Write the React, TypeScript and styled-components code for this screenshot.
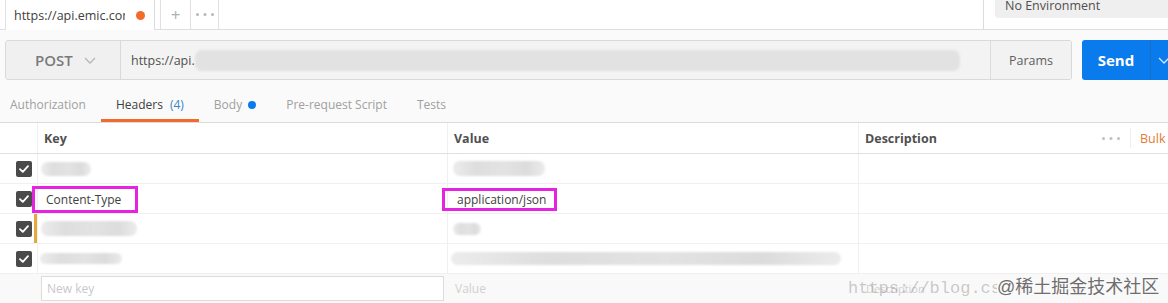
import React from 'react';
import styled, { createGlobalStyle } from 'styled-components';

const GlobalStyle = createGlobalStyle`
  * { box-sizing: border-box; }
  html, body {
    margin: 0;
    padding: 0;
    background: #fafafa;
    font-family: 'Open Sans', 'Noto Sans', sans-serif;
    color: #505050;
  }
`;

interface BlurProps {
  $w: number;
  $h?: number;
  $ml?: number;
  $tone?: string;
}

const Check = () => (
  <svg width="10" height="8" viewBox="0 0 10 8">
    <path d="M1 4.2 L3.8 6.8 L9 1.2" fill="none" stroke="#fff" strokeWidth="1.8" strokeLinecap="round" strokeLinejoin="round" />
  </svg>
);

const Chevron = ({ color }: { color: string }) => (
  <svg width="12" height="7" viewBox="0 0 12 7">
    <path d="M1 1 L6 6 L11 1" fill="none" stroke={color} strokeWidth="1.3" />
  </svg>
);

const Dots = ({ color, size }: { color: string; size: number }) => (
  <svg width={size * 6} height={size} viewBox="0 0 18 3">
    <circle cx="1.5" cy="1.5" r="1.5" fill={color} />
    <circle cx="9" cy="1.5" r="1.5" fill={color} />
    <circle cx="16.5" cy="1.5" r="1.5" fill={color} />
  </svg>
);

const App = () => {
  const rows = [
    { key: <Blur $w={50} $h={14} />, value: <Blur $w={92} $h={15} $ml={-2} /> },
    {
      key: <Highlight $shift={12} $pad={11} $right={14}>Content-Type</Highlight>,
      value: <Highlight $shift={13} $pad={12} $right={8} $slim>application/json</Highlight>,
    },
    { key: <Blur $w={96} $h={15} />, value: <Blur $w={28} $h={12} $ml={-2} />, edited: true },
    { key: <Blur $w={82} $h={11} $ml={-4} />, value: <Blur $w={390} $h={13} $ml={-4} /> },
  ];

  return (
    <Page>
      <GlobalStyle />
      <TopBar>
        <ActiveTab>
          <TabTitle>https://api.emic.com</TabTitle>
          <UnsavedDot />
        </ActiveTab>
        <SmallTab $first>+</SmallTab>
        <SmallTab>
          <Dots color="#b8b8b8" size={3} />
        </SmallTab>
        <TopSpacer />
        <EnvArea>
          <EnvSelect>No Environment</EnvSelect>
        </EnvArea>
      </TopBar>

      <RequestBar>
        <UrlGroup>
          <Method>
            POST
            <Chevron color="#b5b5b5" />
          </Method>
          <UrlInput>
            https://api.
            <Blur $w={765} $h={21} $ml={0} $tone="#e2e2e2" />
          </UrlInput>
          <ParamsButton>Params</ParamsButton>
        </UrlGroup>
        <SendGroup>
          <SendLabel>Send</SendLabel>
          <SendArrow>
            <Chevron color="#cfe4fb" />
          </SendArrow>
        </SendGroup>
      </RequestBar>

      <Tabs>
        <Tab>Authorization</Tab>
        <Tab $active>
          Headers<Count>(4)</Count>
        </Tab>
        <Tab>
          Body<BlueDot />
        </Tab>
        <Tab>Pre-request Script</Tab>
        <Tab>Tests</Tab>
      </Tabs>

      <Table>
        <HeaderRow>
          <Cell />
          <HeadCell>Key</HeadCell>
          <HeadCell>Value</HeadCell>
          <HeadCell>
            Description
            <HeadActions>
              <MoreDots>
                <Dots color="#c0c0c0" size={3} />
              </MoreDots>
              <BulkEdit>Bulk Edit</BulkEdit>
            </HeadActions>
          </HeadCell>
        </HeaderRow>

        {rows.map((row, i) => (
          <Row key={i}>
            <CheckCell>
              <CheckBox>
                <Check />
              </CheckBox>
            </CheckCell>
            <KeyCell $edited={row.edited}>{row.key}</KeyCell>
            <ValueCell>{row.value}</ValueCell>
            <DescCell />
          </Row>
        ))}

        <NewRow>
          <Cell />
          <NewKeyCell>
            <NewKeyInput>New key</NewKeyInput>
          </NewKeyCell>
          <Placeholder>Value</Placeholder>
          <Placeholder $small>Description</Placeholder>
        </NewRow>
      </Table>

      <Watermark>
        <WatermarkUrl>https://blog.cs</WatermarkUrl>
        <WatermarkBrand>@稀土掘金技术社区</WatermarkBrand>
      </Watermark>
    </Page>
  );
};

const Page = styled.div`
  position: relative;
  width: 1168px;
  height: 303px;
  overflow: hidden;
  background: #fafafa;
  font-size: 12px;
`;

const TopBar = styled.div`
  display: flex;
  align-items: stretch;
  height: 30px;
  padding-left: 5px;
  background: #fff;
  border-bottom: 1px solid #dedede;
`;

const ActiveTab = styled.div`
  display: flex;
  align-items: center;
  width: 150px;
  padding: 0 9px 0 8px;
  margin-bottom: -1px;
  background: #fff;
  border-left: 1px solid #e2e2e2;
  border-right: 1px solid #dcdcdc;
`;

const TabTitle = styled.span`
  width: 112px;
  overflow: hidden;
  white-space: nowrap;
  font-size: 12.5px;
  color: #404040;
`;

const UnsavedDot = styled.span`
  width: 9px;
  height: 9px;
  margin-left: 11px;
  border-radius: 50%;
  background: #f26b2a;
`;

const SmallTab = styled.div<{ $first?: boolean }>`
  display: flex;
  align-items: center;
  justify-content: center;
  width: ${({ $first }) => ($first ? '30px' : '29px')};
  margin-left: ${({ $first }) => ($first ? '5px' : '0')};
  border-left: 1px solid #e0e0e0;
  border-right: ${({ $first }) => ($first ? 'none' : '1px solid #e0e0e0')};
  color: #b0b0b0;
  font-size: 17px;
`;

const TopSpacer = styled.div`
  flex: 1;
`;

const EnvArea = styled.div`
  width: 185px;
  padding-left: 11px;
  border-left: 1px solid #dcdcdc;
`;

const EnvSelect = styled.div`
  height: 28px;
  margin-top: -10px;
  padding: 8px 0 0 10px;
  background: #efefef;
  border-radius: 3px 0 0 3px;
  font-size: 12.5px;
  line-height: 16px;
  color: #505050;
`;

const RequestBar = styled.div`
  display: flex;
  height: 40px;
  margin-top: 10px;
  padding-left: 5px;
`;

const UrlGroup = styled.div`
  display: flex;
  flex-shrink: 0;
  width: 1067px;
  border: 1px solid #d9d9d9;
  border-radius: 3px;
  background: #f2f2f2;
  overflow: hidden;
`;

const Method = styled.div`
  display: flex;
  align-items: center;
  gap: 11px;
  width: 115px;
  padding-left: 29px;
  background: #f0f0f0;
  border-right: 1px solid #dadada;
  font-size: 15px;
  font-weight: 600;
  color: #7a7a7a;
`;

const UrlInput = styled.div`
  flex: 1;
  display: flex;
  align-items: center;
  padding-left: 10px;
  font-size: 12.5px;
  color: #505050;
  background: #f3f3f3;
`;

const Blur = styled.span<BlurProps>`
  display: inline-block;
  width: ${({ $w }) => $w}px;
  height: ${({ $h }) => $h ?? 14}px;
  margin-left: ${({ $ml }) => $ml ?? -3}px;
  border-radius: 7px;
  background: ${({ $tone }) =>
    $tone ??
    'linear-gradient(90deg, #ececec 0%, #dedede 25%, #e3e3e3 55%, #dcdcdc 80%, #ececec 100%)'};
  filter: blur(1.2px);
`;

const ParamsButton = styled.div`
  display: flex;
  align-items: center;
  justify-content: center;
  width: 81px;
  border-left: 1px solid #dcdcdc;
  background: #f2f2f2;
  font-size: 12.5px;
  color: #606060;
`;

const SendGroup = styled.div`
  display: flex;
  flex-shrink: 0;
  margin-left: 10px;
  width: 110px;
  border-radius: 3px;
  background: #097bed;
  color: #fff;
`;

const SendLabel = styled.div`
  display: flex;
  align-items: center;
  justify-content: center;
  width: 69px;
  font-size: 15px;
  font-weight: 700;
  border-right: 1px solid #1d6fc4;
`;

const SendArrow = styled.div`
  display: flex;
  align-items: center;
  padding-left: 7px;
`;

const Tabs = styled.div`
  display: flex;
  height: 33px;
  margin-top: 10px;
  border-bottom: 1px solid #dcdcdc;
`;

const Tab = styled.div<{ $active?: boolean }>`
  display: flex;
  align-items: center;
  gap: 7px;
  height: 32px;
  padding: 0 15px;
  border-bottom: 3px solid ${({ $active }) => ($active ? '#f26b2a' : 'transparent')};
  font-size: 12px;
  color: ${({ $active }) => ($active ? '#404040' : '#a0a0a0')};

  &:first-child {
    padding-left: 10px;
  }
`;

const Count = styled.span`
  color: #3b86c6;
`;

const BlueDot = styled.span`
  width: 8px;
  height: 8px;
  margin-left: -1px;
  border-radius: 50%;
  background: #097bed;
`;

const Table = styled.div`
  background: #fff;
`;

const gridColumns = '37px 410px 411px 1fr';

const HeaderRow = styled.div`
  display: grid;
  grid-template-columns: ${gridColumns};
  height: 31px;
  border-bottom: 1px solid #e0e0e0;
`;

const Row = styled.div`
  display: grid;
  grid-template-columns: ${gridColumns};
  height: 30px;
  border-bottom: 1px solid #f0f0f0;
`;

const Cell = styled.div`
  display: flex;
  align-items: center;
`;

const HeadCell = styled(Cell)`
  padding-left: 6px;
  border-left: 1px solid #f0f0f0;
  font-weight: 700;
  font-size: 12.5px;
  color: #505050;
`;

const HeadActions = styled.div`
  display: flex;
  align-items: center;
  margin-left: auto;
  white-space: nowrap;
`;

const MoreDots = styled.span`
  display: flex;
  align-items: center;
  height: 20px;
  padding-right: 10px;
  border-right: 1px solid #eee;
`;

const BulkEdit = styled.span`
  margin-left: 9px;
  width: 28px;
  overflow: hidden;
  font-weight: 400;
  color: #e07b39;
  font-size: 12.5px;
`;

const CheckCell = styled(Cell)`
  padding-left: 16px;
`;

const CheckBox = styled.span`
  display: flex;
  align-items: center;
  justify-content: center;
  width: 16px;
  height: 16px;
  border-radius: 2px;
  background: #4a4a4a;
`;

const KeyCell = styled(Cell)<{ $edited?: boolean }>`
  padding-left: 6px;
  border-left: 1px solid #f0f0f0;
  box-shadow: ${({ $edited }) => ($edited ? '-3px 0 0 #e6a83c' : 'none')};
`;

const ValueCell = styled(Cell)`
  padding-left: 7px;
  border-left: 1px solid #f0f0f0;
`;

const DescCell = styled(Cell)`
  border-left: 1px solid #f0f0f0;
`;

const Highlight = styled.span<{ $shift: number; $pad: number; $right: number; $slim?: boolean }>`
  display: inline-flex;
  align-items: center;
  height: ${({ $slim }) => ($slim ? '23px' : '27px')};
  margin-left: -${({ $shift }) => $shift}px;
  margin-top: ${({ $slim }) => ($slim ? '1px' : '2px')};
  padding: 0 ${({ $right }) => $right}px 0 ${({ $pad }) => $pad}px;
  border: 3px solid #e524e2;
  font-size: 12px;
  color: #404040;
`;

const NewRow = styled.div`
  display: grid;
  grid-template-columns: ${gridColumns};
  height: 29px;
  background: #f9f9f9;
`;

const NewKeyCell = styled(Cell)`
  padding-left: 4px;
`;

const NewKeyInput = styled.div`
  width: 403px;
  height: 25px;
  padding-left: 5px;
  display: flex;
  align-items: center;
  background: #fff;
  border: 1px solid #dcdcdc;
  font-size: 12px;
  color: #c8c8c8;
`;

const Placeholder = styled(Cell)<{ $small?: boolean }>`
  padding-left: 8px;
  font-size: ${({ $small }) => ($small ? '11px' : '12px')};
  color: #d0d0d0;
`;

const Watermark = styled.div`
  position: absolute;
  left: 848px;
  top: 272px;
  display: flex;
  align-items: baseline;
  white-space: nowrap;
  pointer-events: none;
`;

const WatermarkUrl = styled.span`
  width: 149px;
  overflow: hidden;
  font-family: 'Liberation Mono', monospace;
  font-size: 17px;
  color: rgba(140, 140, 140, 0.45);
`;

const WatermarkBrand = styled.span`
  font-family: 'Liberation Sans', 'Noto Sans CJK SC', sans-serif;
  font-size: 18px;
  color: #6e6e6e;
  text-shadow: 0 0 2px #fff;
`;

export default App;
